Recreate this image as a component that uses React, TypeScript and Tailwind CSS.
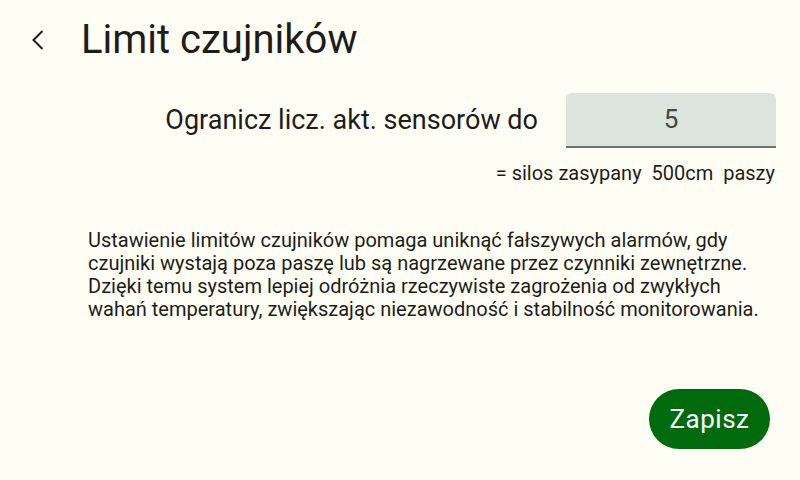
import React, { useState } from 'react';

export default function App() {
  const [limit] = useState(5);

  return (
    <div
      className="w-[800px] h-[480px] bg-[#fffef5] text-[#1c1d18] flex flex-col overflow-hidden"
      style={{ fontFamily: 'Roboto, "Noto Sans", sans-serif' }}
    >
      <div className="flex items-center h-[80px] pl-[32px]">
        <button className="w-[12px] h-[20px] flex items-center justify-center">
          <svg width="12" height="20" viewBox="0 0 12 20" fill="none">
            <path d="M10.5 1 L1.5 10 L10.5 19" stroke="#1c1d18" strokeWidth="2" />
          </svg>
        </button>
        <h1 className="ml-[37px] text-[40px] leading-none">Limit czujników</h1>
      </div>

      <div className="flex justify-end items-center pr-[24px] mt-[13px]">
        <span className="text-[27px] mr-[28px]">Ogranicz licz. akt. sensorów do</span>
        <div className="w-[210px] h-[55px] bg-[#dce5dd] rounded-t-[6px] border-b-2 border-[#6b7566] flex items-center justify-center text-[26px] text-[#43483f]">
          {limit}
        </div>
      </div>
      <div className="flex justify-end pr-[25px] mt-[10px] text-[20px] whitespace-pre">
        {'= silos zasypany  500cm  paszy'}
      </div>

      <p className="ml-[88px] mt-[41px] text-[20px] leading-[23px] whitespace-nowrap">
        Ustawienie limitów czujników pomaga uniknąć fałszywych alarmów, gdy
        <br />
        czujniki wystają poza paszę lub są nagrzewane przez czynniki zewnętrzne.
        <br />
        Dzięki temu system lepiej odróżnia rzeczywiste zagrożenia od zwykłych
        <br />
        wahań temperatury, zwiększając niezawodność i stabilność monitorowania.
      </p>

      <div className="flex-1" />
      <div className="flex justify-end pr-[30px] pb-[31px]">
        <button className="w-[121px] h-[60px] rounded-full bg-[#006b0c] text-white text-[26px] tracking-[0.5px]">
          Zapisz
        </button>
      </div>
    </div>
  );
}
